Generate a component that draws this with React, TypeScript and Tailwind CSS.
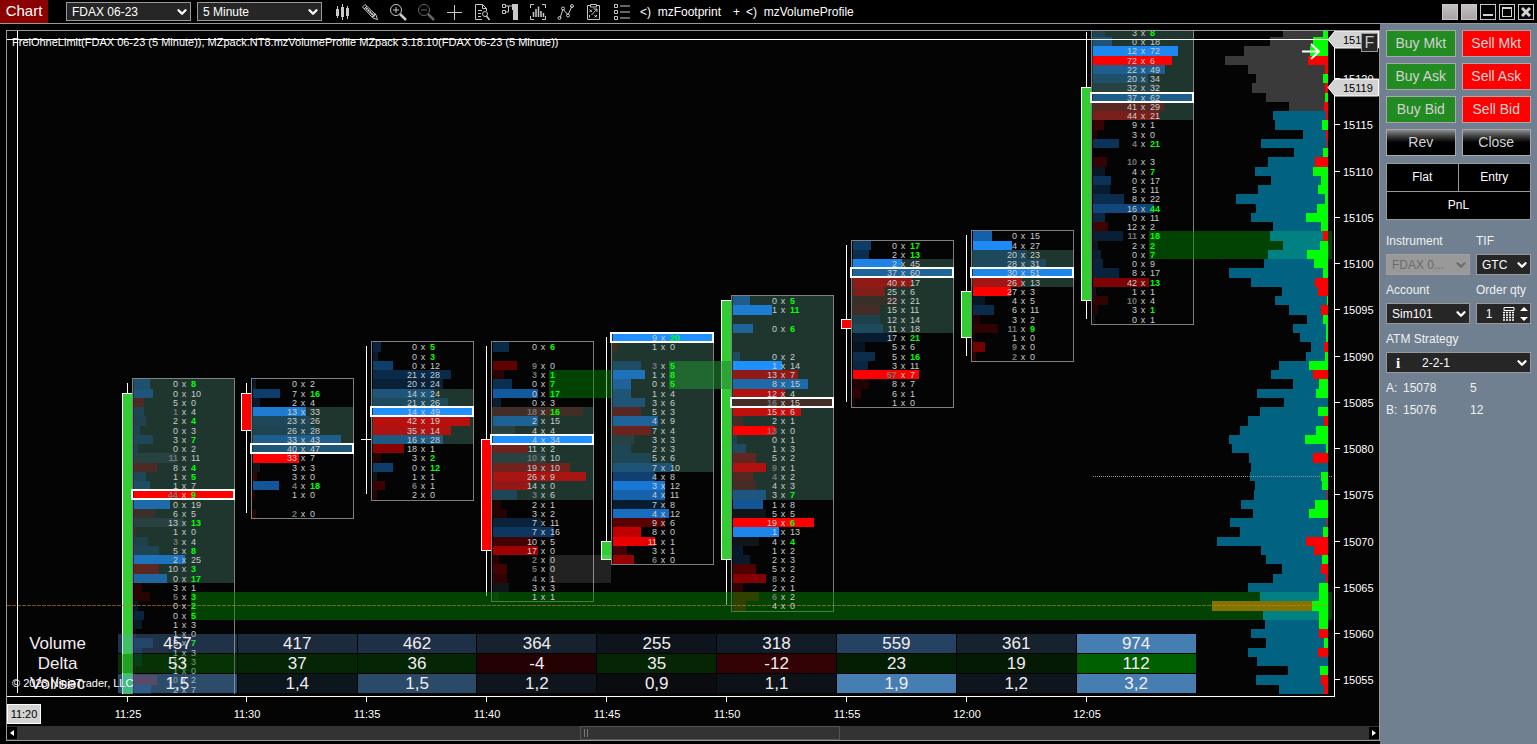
import React from "react";
import { ChevronDown } from "lucide-react";

interface FootprintColumn {
  x: number;
  top: number;
  poc: number;
  valueArea: [number, number];
  high: number;
  low: number;
  body: [number, number];
  up: boolean;
  // "bid ask flags", where flag b / a marks a bid / ask imbalance
  rows: string[];
}

const ROW = 9.25;
const yOf = (price: number) => Math.ceil(124 + (15115 - price) * ROW);
const edgeOf = (price: number) => Math.ceil(120 + (15115 - price) * ROW);

const COLUMNS: FootprintColumn[] = [
  {
    x: 132, top: 15087, poc: 12, valueArea: [0, 21], high: 15087, low: 15053, body: [15086, 15053], up: true,
    rows: ["0 8 a", "0 10", "5 0", "1 4 b", "2 4 a", "0 3", "3 7 a", "0 2", "11 11 b", "8 4 a", "1 5 a", "1 7", "44 9 ba", "0 19", "6 5", "13 13 a", "1 0", "3 4 b", "5 8 a", "2 25", "10 3 a", "0 17 a", "3 1", "5 3 ba", "0 2 a", "0 5 a", "1 3", "1 0", "3 7 a", "1 3", "1 3", "1 0", "10 2 b", "2 7"],
  },
  {
    x: 251, top: 15087, poc: 7, valueArea: [3, 7], high: 15087, low: 15073, body: [15086, 15082], up: false,
    rows: ["0 2", "7 16 a", "2 4", "13 33", "23 26", "26 28", "33 43", "40 47", "33 7", "3 3", "3 0", "4 18 ba", "1 0", "", "2 0 b"],
  },
  {
    x: 371, top: 15091, poc: 7, valueArea: [5, 10], high: 15091, low: 15075, body: [15081, 15081], up: true,
    rows: ["0 5 a", "0 3 a", "0 12", "21 28", "20 24", "14 24", "21 26", "14 49", "42 19", "35 14", "16 28", "18 1", "3 2 a", "0 12 a", "1 1", "6 1 b", "2 0"],
  },
  {
    x: 491, top: 15091, poc: 10, valueArea: [7, 16], high: 15091, low: 15064, body: [15081, 15069], up: false,
    rows: ["0 6 a", "", "9 0 b", "3 1 ba", "0 7 a", "0 17 a", "0 3", "18 16 ba", "2 15", "4 4", "4 34", "11 2", "10 10 b", "19 10", "26 9", "14 0", "3 6 b", "2 1", "3 2", "7 11", "7 16", "10 5", "17 0", "2 0 b", "5 0 b", "4 1 b", "3 3", "1 1"],
  },
  {
    x: 611, top: 15092, poc: 0, valueArea: [0, 14], high: 15092, low: 15068, body: [15070, 15068], up: true,
    rows: ["9 20 a", "1 0", "", "3 5 ba", "1 8 a", "0 5 a", "1 4", "3 6", "5 3", "4 9", "7 4", "3 3", "2 3", "5 6", "7 10", "4 8", "3 12", "4 11", "7 8", "4 12", "9 6", "8 0", "11 1", "3 1", "6 0 b"],
  },
  {
    x: 731, top: 15096, poc: 11, valueArea: [0, 21], high: 15096, low: 15063, body: [15096, 15068], up: true,
    rows: ["0 5 a", "1 11 a", "", "0 6 a", "", "", "0 2", "1 14", "13 7", "8 15", "12 4", "16 15 b", "15 6", "2 1", "13 0 b", "0 1", "1 3", "5 2", "9 1 b", "4 2 b", "4 3", "3 7 a", "1 8", "5 5", "19 6 a", "1 13", "4 4 a", "1 2", "2 3", "5 2", "8 2 b", "2 1", "6 2 b", "4 0"],
  },
  {
    x: 851, top: 15102, poc: 3, valueArea: [2, 9], high: 15102, low: 15085, body: [15094, 15093], up: false,
    rows: ["0 17 a", "2 13 a", "2 45", "37 60", "40 17", "25 6", "22 21", "15 11", "12 14", "11 18", "17 21 a", "5 6", "5 16 a", "3 11", "57 7 b", "8 7", "6 1", "1 0"],
  },
  {
    x: 971, top: 15103, poc: 4, valueArea: [2, 5], high: 15103, low: 15090, body: [15097, 15092], up: true,
    rows: ["0 15", "4 27", "20 23", "28 31", "30 51", "26 13", "27 3", "4 5", "6 11", "3 2", "11 9 ba", "1 0", "9 0 b", "2 0 b"],
  },
  {
    x: 1091, top: 15125, poc: 7, valueArea: [0, 9], high: 15125, low: 15094, body: [15119, 15096], up: true,
    rows: ["3 8 a", "0 18", "12 72", "72 6", "22 49", "20 34", "32 32", "37 62", "41 29", "44 21", "9 1", "3 0", "4 21 ba", "", "10 3 b", "4 7 a", "0 17", "5 11", "8 22", "16 44 a", "0 11", "12 2", "11 18 ba", "2 2 a", "0 7 a", "0 9", "8 17", "42 13 a", "1 1", "10 4 b", "3 1 a", "0 1"],
  },
];

// [volume, delta] per price level, from 15125 downwards
const PROFILE: [number, number][] = [
  [45, 5], [58, 15], [84, 18], [103, -20], [80, -3], [72, 5], [76, -3], [62, 3], [39, -4], [55, -2],
  [53, 6], [25, -2], [67, -1], [34, 5], [60, -13], [73, 15], [57, 7], [70, 10], [92, 3], [72, 11],
  [77, 22], [55, 7], [58, -5], [45, 8], [60, 21], [64, 14], [99, 5], [77, -13], [46, -10], [53, 1],
  [39, -7], [21, 5], [35, 2], [28, 2], [17, -4], [22, 3], [49, 19], [57, -15], [35, 9], [71, 12],
  [44, 0], [68, 10], [80, -4], [88, 12], [99, 23], [96, 2], [79, -15], [77, 0], [78, 7], [73, 6],
  [74, -1], [87, 13], [75, 19], [98, -1], [88, 5], [111, -22], [67, -14], [62, 6], [46, -7], [55, -2],
  [80, 9], [68, 9], [116, 16], [65, 9], [63, 9], [77, -9], [62, 4], [80, -10], [71, 0], [40, 8],
  [72, -7], [49, -4],
];

const ZONES = [
  { x: 549, y: 370, w: 62, h: 28, fill: "#008000", opacity: 0.5 },
  { x: 669, y: 361, w: 62, h: 28, fill: "#228b32", opacity: 0.6 },
  { x: 549, y: 555, w: 62, h: 28, fill: "#ffffff", opacity: 0.12 },
  { x: 1149, y: 231, w: 183, h: 28, fill: "#008000", opacity: 0.5 },
  { x: 191, y: 592, w: 1141, h: 28, fill: "#008000", opacity: 0.5 },
];

const TIMES = ["11:25", "11:30", "11:35", "11:40", "11:45", "11:50", "11:55", "12:00", "12:05"];

const STATS = [
  {
    label: "Volume",
    values: ["457", "417", "462", "364", "255", "318", "559", "361", "974"],
    colors: ["bg-[rgba(100,160,230,0.3)]", "bg-[#1c2b3b]", "bg-[#1e3045]", "bg-[#16222d]", "bg-[#0e141b]", "bg-[#121c26]", "bg-[#264262]", "bg-[#16222d]", "bg-[#467eb2]"],
  },
  {
    label: "Delta",
    values: ["53", "37", "36", "-4", "35", "-12", "23", "19", "112"],
    colors: ["bg-[rgba(9,107,9,0.45)]", "bg-[#042604]", "bg-[#042604]", "bg-[#240204]", "bg-[#042604]", "bg-[#320204]", "bg-[#041e04]", "bg-[#041a04]", "bg-[#006000]"],
  },
  {
    label: "Vol/sec",
    values: ["1,5", "1,4", "1,5", "1,2", "0,9", "1,1", "1,9", "1,2", "3,2"],
    colors: ["bg-[rgba(93,164,231,0.45)]", "bg-[#0e161d]", "bg-[#2a4a68]", "bg-[#0e151d]", "bg-[#0a0c10]", "bg-[#0c1218]", "bg-[#467eb2]", "bg-[#0e151d]", "bg-[#467eb2]"],
  },
];

function parseRows(col: FootprintColumn) {
  const rows = col.rows.map((raw, i) => {
    if (!raw) return null;
    const [bid, ask, flags = ""] = raw.split(" ");
    return {
      i,
      bid: Number(bid),
      ask: Number(ask),
      bidHit: flags.includes("b"),
      askHit: flags.includes("a"),
      y: edgeOf(col.top - i),
      h: edgeOf(col.top - i - 1) - edgeOf(col.top - i),
    };
  });
  return rows.filter((r) => r !== null);
}

function FootprintBars({ col }: { col: FootprintColumn }) {
  const rows = parseRows(col);
  const maxVolume = Math.max(...rows.map((r) => r.bid + r.ask));
  const maxDelta = Math.max(...rows.map((r) => Math.abs(r.ask - r.bid)));
  const [vaFrom, vaTo] = col.valueArea;
  const top = edgeOf(col.top) - 1;
  const bottom = edgeOf(col.top - col.rows.length);
  const bodyTop = yOf(col.body[0]);
  const bodyBottom = yOf(col.body[1]);

  return (
    <g>
      <line x1={col.x - 4.5} x2={col.x - 4.5} y1={yOf(col.high)} y2={yOf(col.low)} stroke="#fff" />
      {bodyTop === bodyBottom ? (
        <line x1={col.x - 10} x2={col.x} y1={bodyTop + 0.5} y2={bodyTop + 0.5} stroke="#fff" />
      ) : (
        <rect x={col.x - 9.5} y={bodyTop + 0.5} width={10} height={bodyBottom - bodyTop} fill={col.up ? "#32cd32" : "#ff0000"} stroke="#fff" />
      )}
      <rect x={col.x} y={edgeOf(col.top - vaFrom)} width={103} height={edgeOf(col.top - vaTo - 1) - edgeOf(col.top - vaFrom)} fill="#1f362f" />
      {rows.map((r) => {
        const delta = r.ask - r.bid;
        const color = delta > 0 ? "#1e90ff" : delta < 0 ? "#ff0000" : "#78b4d8";
        return (
          <rect
            key={r.i}
            x={col.x + 2}
            y={r.y}
            width={Math.ceil(((r.bid + r.ask) / maxVolume) * 100)}
            height={r.h}
            fill={color}
            opacity={0.1 + (0.9 * Math.abs(delta)) / maxDelta}
          />
        );
      })}
      <rect x={col.x + 0.5} y={top + 0.5} width={102} height={bottom - top} fill="none" stroke="#808080" />
      <rect x={col.x} y={edgeOf(col.top - col.poc)} width={102} height={9} fill="none" stroke="#fff" strokeWidth={2} />
    </g>
  );
}

function FootprintText({ col }: { col: FootprintColumn }) {
  return (
    <g fontSize={9} fill="#c8ccca">
      {parseRows(col).map((r) => (
        <g key={r.i}>
          <text x={col.x + 46} y={r.y + 8} textAnchor="end" fill={r.bidHit ? "#747474" : undefined} fontWeight={r.bidHit ? 700 : 400}>
            {r.bid}
          </text>
          <text x={col.x + 52} y={r.y + 8} textAnchor="middle">
            x
          </text>
          <text x={col.x + 59} y={r.y + 8} fill={r.askHit ? "#00ff00" : undefined} fontWeight={r.askHit ? 700 : 400}>
            {r.ask}
          </text>
        </g>
      ))}
    </g>
  );
}

function VolumeProfile() {
  return (
    <g>
      {PROFILE.map(([volume, delta], i) => {
        const price = 15125 - i;
        const y = edgeOf(price);
        const h = edgeOf(price - 1) - y;
        const d = Math.abs(delta);
        const fill = price === 15063 ? "#ffa500" : price >= 15117 ? "#707070" : "#00bfff";
        return (
          <g key={price}>
            <rect x={1328 - volume} y={y} width={volume - d} height={h} fill={fill} opacity={0.5} />
            <rect x={1328 - d} y={y} width={d} height={h} fill={delta > 0 ? "#00ff00" : "#ff0000"} />
          </g>
        );
      })}
    </g>
  );
}

function PriceTag({ y, label }: { y: number; label: string }) {
  return (
    <g>
      <path d={`M1328 ${y} L1335 ${y - 8.5} H1378.5 V${y + 8.5} H1335 Z`} fill="#d3d3d3" stroke="#fff" />
      <text x={1343} y={y + 4} fill="#000">
        {label}
      </text>
    </g>
  );
}

function Chart() {
  const prices = Array.from({ length: 14 }, (_, i) => 15120 - i * 5);
  return (
    <svg
      viewBox="7 31 1372 695"
      preserveAspectRatio="xMinYMin meet"
      className="block h-full w-full"
      role="img"
      aria-label="FDAX 06-23 footprint chart"
      fontFamily="'Liberation Sans', Arial, sans-serif"
    >
      <clipPath id="plot">
        <rect x="7" y="31" width="1327" height="663" />
      </clipPath>
      <g clipPath="url(#plot)">
        {COLUMNS.map((col) => (
          <FootprintBars key={col.x} col={col} />
        ))}
        {ZONES.map((z, i) => (
          <rect key={i} x={z.x} y={z.y} width={z.w} height={z.h} fill={z.fill} opacity={z.opacity} />
        ))}
        <VolumeProfile />
        <line x1="7" x2="1328" y1="605.5" y2="605.5" stroke="#d08020" strokeDasharray="4 1" opacity="0.6" />
        <line x1="1093" x2="1332" y1="476.5" y2="476.5" stroke="#909090" strokeDasharray="1 1" />
        {COLUMNS.map((col) => (
          <FootprintText key={col.x} col={col} />
        ))}
      </g>
      <g fontSize={11} fill="#fff" stroke="none">
        <text x="12" y="46">
          FreiOhneLimit(FDAX 06-23 (5 Minute)), MZpack.NT8.mzVolumeProfile MZpack 3.18.10(FDAX 06-23 (5 Minute))
        </text>
        <path d="M17.5 31V693M7 39.5H1328M7 696.5H1335M1334.5 48V697" stroke="#fff" fill="none" />
        {prices.map((p) => (
          <g key={p}>
            <path d={`M1335 ${yOf(p) + 0.5}h5`} stroke="#fff" />
            <text x="1343" y={yOf(p) + 5}>
              {p}
            </text>
          </g>
        ))}
        <PriceTag y={39.5} label="15124" />
        <PriceTag y={87.5} label="15119" />
        <path d="M1302 51.5h17M1311 44l8 7.5l-8 7.5" stroke="#fff" strokeWidth="2" fill="none" />
        {TIMES.map((t, i) => (
          <g key={t}>
            <path d={`M${COLUMNS[i].x - 4.5} 697v5`} stroke="#fff" />
            <text x={COLUMNS[i].x - 4} y="718" textAnchor="middle">
              {t}
            </text>
          </g>
        ))}
        <rect x="7.5" y="704.5" width="33" height="19" fill="#d3d3d3" stroke="#fff" />
        <text x="24" y="718" fill="#000" textAnchor="middle">
          11:20
        </text>
      </g>
    </svg>
  );
}

function StatsTable() {
  return (
    <table className="absolute bottom-[32px] left-0 w-[86.7%] table-fixed border-separate border-spacing-px text-[17px] leading-[19px] text-[#f4ecf2]">
      <tbody>
        {STATS.map((row) => (
          <tr key={row.label}>
            <th scope="row" className="w-[109px] p-0 pr-2.5 text-center font-normal">
              {row.label}
            </th>
            {row.values.map((v, i) => (
              <td key={i} className={`h-[19px] p-0 text-center ${row.colors[i]}`}>
                {v}
              </td>
            ))}
          </tr>
        ))}
      </tbody>
    </table>
  );
}

interface SelectProps {
  label: string;
  value: string;
  className?: string;
  disabled?: boolean;
  id?: string;
}

function Select({ label, value, className = "", disabled = false, id }: SelectProps) {
  return (
    <div className={`relative ${className}`}>
      <select
        id={id}
        aria-label={label}
        disabled={disabled}
        className={`block h-full w-full appearance-none border pr-4 pl-[5px] text-[12px] disabled:opacity-100 ${
          disabled ? "border-[#a0a0a0] bg-[#999] text-[#6c6c6c]" : "border-[#999] bg-[#262626] text-white"
        }`}
      >
        <option>{value}</option>
      </select>
      <ChevronDown
        className={`pointer-events-none absolute top-1/2 right-0.5 size-3.5 -translate-y-1/2 ${disabled ? "text-[#6c6c6c]" : "text-white"}`}
        strokeWidth={4}
      />
    </div>
  );
}

function ToolIcon({ label, dim = false, children }: { label: string; dim?: boolean; children: React.ReactNode }) {
  return (
    <button type="button" aria-label={label} className={dim ? "text-[#666]" : "text-[#c8c8c8]"}>
      <svg viewBox="0 0 18 18" className="size-[18px]" fill="none" stroke="currentColor">
        {children}
      </svg>
    </button>
  );
}

function Toolbar() {
  return (
    <header className="flex h-6 shrink-0 items-center border-b border-[#999] bg-black">
      <h1 className="flex h-full w-12 items-center justify-center bg-[#8b0000] text-[15px]">Chart</h1>
      <Select label="Instrument" value="FDAX 06-23" className="ml-[18px] h-[19px] w-[125px]" />
      <Select label="Interval" value="5 Minute" className="ml-1.5 h-[19px] w-[125px]" />
      <nav className="ml-[11px] flex gap-[10px]">
        <ToolIcon label="Chart style">
          <path d="M4.5 3v12M9.5 1v16M14.5 3v13" />
          <path d="M3 6h3v7H3zM8 4h3v10H8zM13 5h3v8h-3z" fill="currentColor" stroke="none" />
        </ToolIcon>
        <ToolIcon label="Drawing tools">
          <path d="M1.5 4L4 1.5L15 12l1.5 4.5L12 15Z" />
          <path d="M5 5l8.5 8.500" strokeWidth="2" strokeDasharray="2 .5" />
          <path d="M3 6l3-3M11 14l3.500-3.500" />
        </ToolIcon>
        <ToolIcon label="Zoom in">
          <circle cx="7" cy="7" r="5.500" />
          <path d="M4 7h6M7 4v6" />
          <path d="M11 11l6 6" strokeWidth="2.500" />
        </ToolIcon>
        <ToolIcon label="Zoom out" dim>
          <circle cx="7" cy="7" r="5.500" />
          <path d="M4 7h6" />
          <path d="M11 11l6 6" strokeWidth="2.500" />
        </ToolIcon>
        <ToolIcon label="Crosshair">
          <path d="M9.500 2v15M2 9.500h15" />
        </ToolIcon>
        <ToolIcon label="Data box">
          <path d="M9 16.500H2.500v-15h7l4 4V8M9.500 1.500v4h4" />
          <path d="M5 7.500h4M5 10.500h3M5 13.500h3" />
          <circle cx="12" cy="11" r="2.500" />
          <path d="M13.500 13l3 4" strokeWidth="1.500" />
        </ToolIcon>
        <ToolIcon label="Chart trader">
          <path d="M11 1h6v16h-5V7h-1z" fill="currentColor" stroke="none" />
          <path d="M1.500 1.500h3v3h-3zM1.500 7.500h3v3h-3zM5 3h6M5 9h2.500V3" />
        </ToolIcon>
        <ToolIcon label="Data series">
          <path d="M1.500 5V1.500H5M13 1.500h3.500V5M1.500 13v3.500H5M13 16.500h3.500V13" />
          <path d="M4.500 14V9M7 14V6M9.500 14V3.500M12 14V8M14.500 14v-4" strokeWidth="1.500" />
        </ToolIcon>
        <ToolIcon label="Indicators">
          <path d="M3 15L6 6l5 6 4-9" />
          <circle cx="2.500" cy="15" r="1.500" />
          <circle cx="6" cy="5.500" r="1.500" />
          <circle cx="11" cy="12.500" r="1.500" />
          <circle cx="15" cy="3" r="1.500" />
        </ToolIcon>
        <ToolIcon label="Strategies">
          <path d="M5 2.500H2.500v14h12v-14H12M5.500 1.500h6v2.500h-6z" />
          <path d="M4.500 6.500l2.500 2.500M7 6.500L4.500 9M8.500 6h3.500V9M12 6L6.500 12M9.500 12l2.500 2.500M12 12l-2.500 2.500M4.500 12v2.500" />
        </ToolIcon>
        <ToolIcon label="Properties">
          <path d="M1.500 1.500h3v3h-3zM1.500 7.500h3v3h-3zM1.500 13.500h3v3h-3zM7 3h10M7 9h10M7 15h10" />
        </ToolIcon>
      </nav>
      <div className="ml-[9px] flex text-[12px] whitespace-pre">
        <button type="button">{"<)  mzFootprint"}</button>
        <span className="ml-3">+</span>
        <button type="button" className="ml-1.5">
          {"<)  mzVolumeProfile"}
        </button>
      </div>
      <div className="mr-[3px] ml-auto flex gap-[3px]">
        <button type="button" aria-label="Link instrument" className="size-4 border border-[#c8c8c8] bg-linear-to-b from-[#c4c0c0] to-[#a8a4a4]" />
        <button type="button" aria-label="Link interval" className="size-4 border border-[#c8c8c8] bg-linear-to-b from-[#c4c0c0] to-[#a8a4a4]" />
        <button type="button" aria-label="Minimize" className="flex size-4 items-end justify-center border border-[#c8c8c8] pb-[3px]">
          <span className="h-0.5 w-2.5 bg-[#d3d3d3]" />
        </button>
        <button type="button" aria-label="Maximize" className="flex size-4 items-center justify-center border border-[#c8c8c8]">
          <span className="size-2.5 border border-t-2 border-[#d3d3d3]" />
        </button>
        <button type="button" aria-label="Close" className="flex size-4 items-center justify-center border border-[#c8c8c8]">
          <svg viewBox="0 0 10 10" className="size-2.5" stroke="#d3d3d3" strokeWidth="3">
            <path d="M1 1l8 8M9 1L1 9" />
          </svg>
        </button>
      </div>
    </header>
  );
}

const ORDER_BUTTONS = [
  { label: "Buy Mkt", style: "bg-[#228b22]" },
  { label: "Sell Mkt", style: "bg-[#ff0000]" },
  { label: "Buy Ask", style: "bg-[#228b22]" },
  { label: "Sell Ask", style: "bg-[#ff0000]" },
  { label: "Buy Bid", style: "bg-[#228b22]" },
  { label: "Sell Bid", style: "bg-[#ff0000]" },
  { label: "Rev", style: "bg-linear-to-b from-[#8c8c8c] to-black to-60%" },
  { label: "Close", style: "bg-linear-to-b from-[#8c8c8c] to-black to-60%" },
];

function ChartTrader() {
  return (
    <aside className="w-[157px] shrink-0 bg-[#708090] px-1.5 pt-1.5 text-[12px] text-[#eef0f2]">
      <div className="grid grid-cols-2 gap-1.5">
        {ORDER_BUTTONS.map((b) => (
          <button key={b.label} type="button" className={`h-[27px] border border-[#a9a9a9] text-[14px] text-[#d3d3d3] ${b.style}`}>
            {b.label}
          </button>
        ))}
      </div>
      <div className="mt-[7px] grid grid-cols-2 border border-[#999] bg-black text-center leading-[27px] text-white">
        <div className="border-r border-[#999]">Flat</div>
        <div>Entry</div>
        <div className="col-span-2 border-t border-[#999]">PnL</div>
      </div>

      <div className="mt-3 flex flex-col gap-1.5 leading-[18px]">
        <div className="flex gap-1.5">
          <div className="grow">
            <label htmlFor="instrument">Instrument</label>
            <Select id="instrument" label="Instrument" value="FDAX 0..." disabled className="mt-1 h-[21px]" />
          </div>
          <div className="w-[55px]">
            <label htmlFor="tif">TIF</label>
            <Select id="tif" label="TIF" value="GTC" className="mt-1 h-[21px]" />
          </div>
        </div>
        <div className="flex gap-1.5">
          <div className="grow">
            <label htmlFor="account">Account</label>
            <Select id="account" label="Account" value="Sim101" className="mt-1 h-[21px]" />
          </div>
          <div className="w-[55px]">
            <label htmlFor="qty" className="whitespace-nowrap">
              Order qty
            </label>
            <div className="mt-1 flex h-[21px] items-center justify-between border border-[#999] bg-[#262626] pr-0.5 text-white">
              <input id="qty" type="text" defaultValue="1" className="w-6 bg-transparent text-center" />
              <svg viewBox="0 0 12 14" className="h-3.5 w-3 shrink-0" stroke="#fff" fill="none">
                <path d="M1 .5h10v3h-10z" />
                <path d="M0 5.500h12M0 8h12M0 10.500h12M0 13h12" strokeWidth="1.500" strokeDasharray="2 1" />
              </svg>
              <svg viewBox="0 0 8 14" className="ml-1 h-3.5 w-2 shrink-0" fill="#fff">
                <path d="M4 0l4 4H0zM4 14l4-4H0z" />
              </svg>
            </div>
          </div>
        </div>
        <div>
          <label htmlFor="atm">ATM Strategy</label>
          <div className="relative mt-1">
            <Select id="atm" label="ATM Strategy" value={"\u00a0\u00a0\u00a0\u00a0\u00a0\u00a0\u00a0\u00a0\u00a02-2-1"} className="h-[21px]" />
            <span className="pointer-events-none absolute top-0.5 left-2.5 font-[Liberation_Serif,serif] text-[15px] font-bold text-white">i</span>
          </div>
        </div>
      </div>

      <dl className="mt-1 leading-[22px]">
        {[
          ["A:", "15078", "5"],
          ["B:", "15076", "12"],
        ].map(([side, price, size]) => (
          <div key={side} className="flex">
            <dt className="w-[17px]">{side}</dt>
            <dd className="w-[67px]">{price}</dd>
            <dd>{size}</dd>
          </div>
        ))}
      </dl>
    </aside>
  );
}

export default function App() {
  return (
    <div className="flex h-screen flex-col bg-black font-[Liberation_Sans,Arial,sans-serif] text-white">
      <Toolbar />
      <div className="flex min-h-0 grow">
        <main className="flex min-w-0 grow flex-col pt-1.5 pb-[3px] pl-1.5">
          <div className="relative flex min-h-0 grow flex-col border border-[#999] bg-[#040404]">
            <div className="relative min-h-0 grow">
              <Chart />
              <StatsTable />
              <p className="absolute bottom-9 left-[5px] text-[11px] leading-[14px]">© 2023 NinjaTrader, LLC</p>
              <button
                type="button"
                className="absolute top-0.5 right-px flex h-[19px] w-[17px] items-center justify-center border border-[#999] bg-[#262626] text-[16px] leading-none text-[#c8c8c8]"
              >
                F
              </button>
            </div>
            <div className="flex h-3.5 shrink-0 items-center bg-[#333]">
              <button type="button" aria-label="Scroll left" className="flex h-3 w-2.5 items-center justify-center bg-black">
                <svg viewBox="0 0 4 6" className="h-1.5 w-1" fill="#fff">
                  <path d="M4 0v6L0 3z" />
                </svg>
              </button>
              <div className="ml-[41%] flex h-full w-[19%] items-center gap-0.5 border border-[#555] pl-[3px]">
                <span className="h-2 w-px bg-[#777]" />
                <span className="h-2 w-px bg-[#777]" />
              </div>
              <button type="button" aria-label="Scroll right" className="ml-auto flex h-3 w-2.5 items-center justify-center bg-black">
                <svg viewBox="0 0 4 6" className="h-1.5 w-1" fill="#fff">
                  <path d="M0 0v6l4-3z" />
                </svg>
              </button>
            </div>
          </div>
        </main>
        <ChartTrader />
      </div>
    </div>
  );
}
